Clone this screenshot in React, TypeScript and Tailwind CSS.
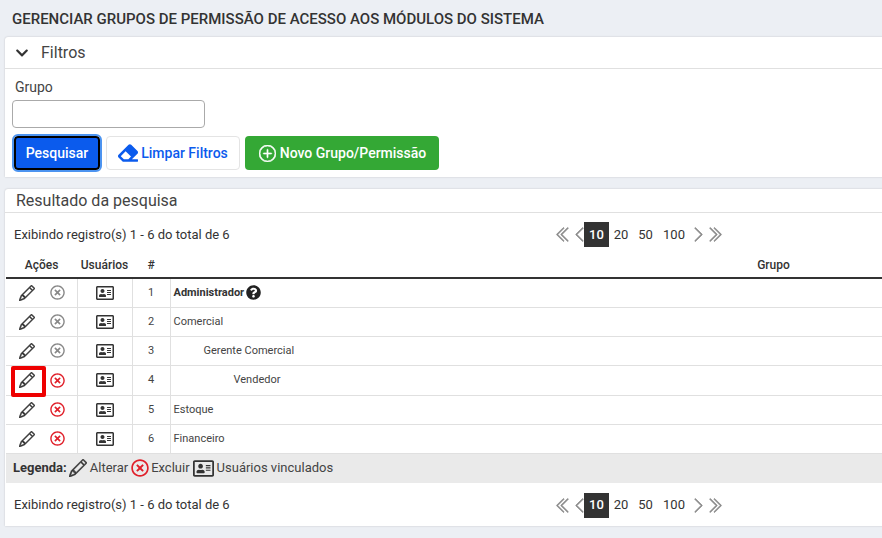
import React from 'react';
import { BsChevronDoubleLeft, BsChevronDoubleRight, BsChevronLeft, BsChevronRight, BsPencil, BsPlusCircle } from 'react-icons/bs';
import { FaChevronDown, FaEraser, FaQuestionCircle, FaRegAddressCard, FaRegTimesCircle } from 'react-icons/fa';

const rows = [
  { id: 1, name: 'Administrador', indent: '', height: 'h-[29px]', strong: true, locked: true },
  { id: 2, name: 'Comercial', indent: '', height: 'h-[29px]', locked: true },
  { id: 3, name: 'Gerente Comercial', indent: 'pl-[30px]', height: 'h-[29px]', locked: true },
  { id: 4, name: 'Vendedor', indent: 'pl-[60px]', height: 'h-[30px]', marked: true },
  { id: 5, name: 'Estoque', indent: '', height: 'h-[29px]' },
  { id: 6, name: 'Financeiro', indent: '', height: 'h-[29px]' },
];

function Pager() {
  return (
    <div className="flex items-center text-[13px] text-[#333]">
      <BsChevronDoubleLeft stroke="currentColor" strokeWidth={0.6} className="text-[#8a8a8a] text-[17px]" />
      <BsChevronLeft stroke="currentColor" strokeWidth={0.6} className="text-[#8a8a8a] text-[17px] ml-[-1px] mr-[-4px]" />
      <span className="bg-[#333] text-white w-[25px] h-[25px] flex items-center justify-center font-medium">10</span>
      <span className="w-[24px] text-center">20</span>
      <span className="w-[25px] text-center">50</span>
      <span className="w-[32px] text-center">100</span>
      <BsChevronRight stroke="currentColor" strokeWidth={0.6} className="text-[#8a8a8a] text-[17px]" />
      <BsChevronDoubleRight stroke="currentColor" strokeWidth={0.6} className="text-[#8a8a8a] text-[17px] ml-[-1px]" />
    </div>
  );
}

function Summary() {
  return (
    <div className="flex items-center h-[25px]">
      <div className="w-[550px] pl-[9px] text-[13px] text-[#333]">Exibindo registro(s) 1 - 6 do total de 6</div>
      <Pager />
    </div>
  );
}

export default function App() {
  return (
    <div className="w-[882px] h-[538px] overflow-hidden bg-[#eceff4] font-['Roboto',sans-serif] text-[#333]">
      <div className="w-[1385px] pl-[5px]">
        <h1 className="h-[37px] flex items-center pl-[7px] pt-[1px] text-[15px] font-medium text-[#333]">
          GERENCIAR GRUPOS DE PERMISSÃO DE ACESSO AOS MÓDULOS DO SISTEMA
        </h1>

        <section className="h-[140px] bg-white rounded-t-[3px] shadow-[0_0_2px_rgba(0,0,0,0.2)]">
          <div className="h-[32px] flex items-center border-b border-[#e0e0e0] pl-[10px]">
            <FaChevronDown className="text-[14px] text-[#333]" />
            <span className="ml-[12px] text-[16px] text-[#444]">Filtros</span>
          </div>
          <div className="pl-[7px]">
            <label className="block pl-[3px] pt-[9px] text-[14px] leading-[19px] text-[#444]">Grupo</label>
            <input className="block mt-[3px] w-[193px] h-[28px] bg-white border border-[#aaa] rounded-[4px]" />
            <div className="flex items-center gap-[5px] mt-[8px]">
              <button className="w-[86px] h-[34px] rounded-[4px] bg-[#0b5bed] border-2 border-black outline outline-2 outline-[#4d94f0] ml-[2px] text-[14px] font-medium text-white">
                Pesquisar
              </button>
              <button className="w-[134px] h-[34px] ml-[1px] flex items-center justify-center gap-[3px] rounded-[4px] bg-white border border-[#e4e4e4] text-[14px] font-medium text-[#0b5bed]">
                <FaEraser className="text-[20px]" />
                Limpar Filtros
              </button>
              <button className="w-[194px] h-[34px] flex items-center justify-center gap-[4px] pl-[1px] rounded-[4px] bg-[#34a835] text-[14px] font-medium text-white">
                <BsPlusCircle stroke="currentColor" strokeWidth={0.6} className="text-[17px]" />
                Novo Grupo/Permissão
              </button>
            </div>
          </div>
        </section>

        <section className="mt-[12px] h-[337px] bg-white rounded-t-[3px] shadow-[0_0_2px_rgba(0,0,0,0.2)]">
          <div className="h-[24px] flex items-center border-b border-[#e0e0e0] pl-[11px] text-[16px] text-[#444]">
            Resultado da pesquisa
          </div>
          <div className="pt-[9px]">
            <Summary />
          </div>
          <table className="mt-[6px] ml-[1px] w-[1371px] table-fixed border-collapse text-[11px] text-[#444]">
            <colgroup>
              <col className="w-[71px]" />
              <col className="w-[55px]" />
              <col className="w-[38px]" />
              <col />
            </colgroup>
            <thead>
              <tr className="h-[25px] border-b-2 border-[#333] text-[12px] text-[#333]">
                <th className="font-medium">Ações</th>
                <th className="font-medium">Usuários</th>
                <th className="font-medium">#</th>
                <th className="font-medium">Grupo</th>
              </tr>
            </thead>
            <tbody>
              {rows.map((r) => (
                <tr key={r.id} className={`${r.height} border-b border-[#e0e0e0]`}>
                  <td className="relative border-r border-[#e0e0e0]">
                    <div className="flex items-center pl-[13px] gap-[15px]">
                      <BsPencil stroke="currentColor" strokeWidth={0.5} className="text-[16px] text-[#333]" />
                      <FaRegTimesCircle className={r.locked ? 'text-[15px] text-[#888]' : 'text-[15px] text-[#e0202a]'} />
                    </div>
                    {r.marked && <div className="absolute left-[5px] top-[0px] w-[35px] h-[31px] border-[4px] border-[#ee0000] rounded-[2px]" />}
                  </td>
                  <td className="border-r border-[#e0e0e0]">
                    <FaRegAddressCard className="mx-auto text-[18px] text-[#333]" />
                  </td>
                  <td className="border-r border-[#e0e0e0] text-center pt-[1px]">{r.id}</td>
                  <td className={r.indent}>
                    <div className="flex items-center h-[15px] pl-[3px] mt-[1px]">
                      <span className={r.strong ? 'font-bold text-[#333]' : ''}>{r.name}</span>
                      {r.strong && <FaQuestionCircle className="ml-[2px] mb-[2px] text-[15px] text-[#222]" />}
                    </div>
                  </td>
                </tr>
              ))}
            </tbody>
          </table>
          <div className="ml-[1px] h-[29px] bg-[#eaeaea] flex items-center pl-[7px] text-[13px] text-[#444]">
            <b className="font-bold text-[#333]">Legenda:</b>
            <BsPencil stroke="currentColor" strokeWidth={0.5} className="ml-[2px] text-[18px] text-[#333]" />
            <span className="ml-[3px]">Alterar</span>
            <FaRegTimesCircle className="ml-[3px] text-[18px] text-[#e0202a]" />
            <span className="ml-[2px]">Excluir</span>
            <FaRegAddressCard className="ml-[3px] text-[21px] text-[#333]" />
            <span className="ml-[3px]">Usuários vinculados</span>
          </div>
          <div className="pt-[10px]">
            <Summary />
          </div>
        </section>
      </div>
    </div>
  );
}
